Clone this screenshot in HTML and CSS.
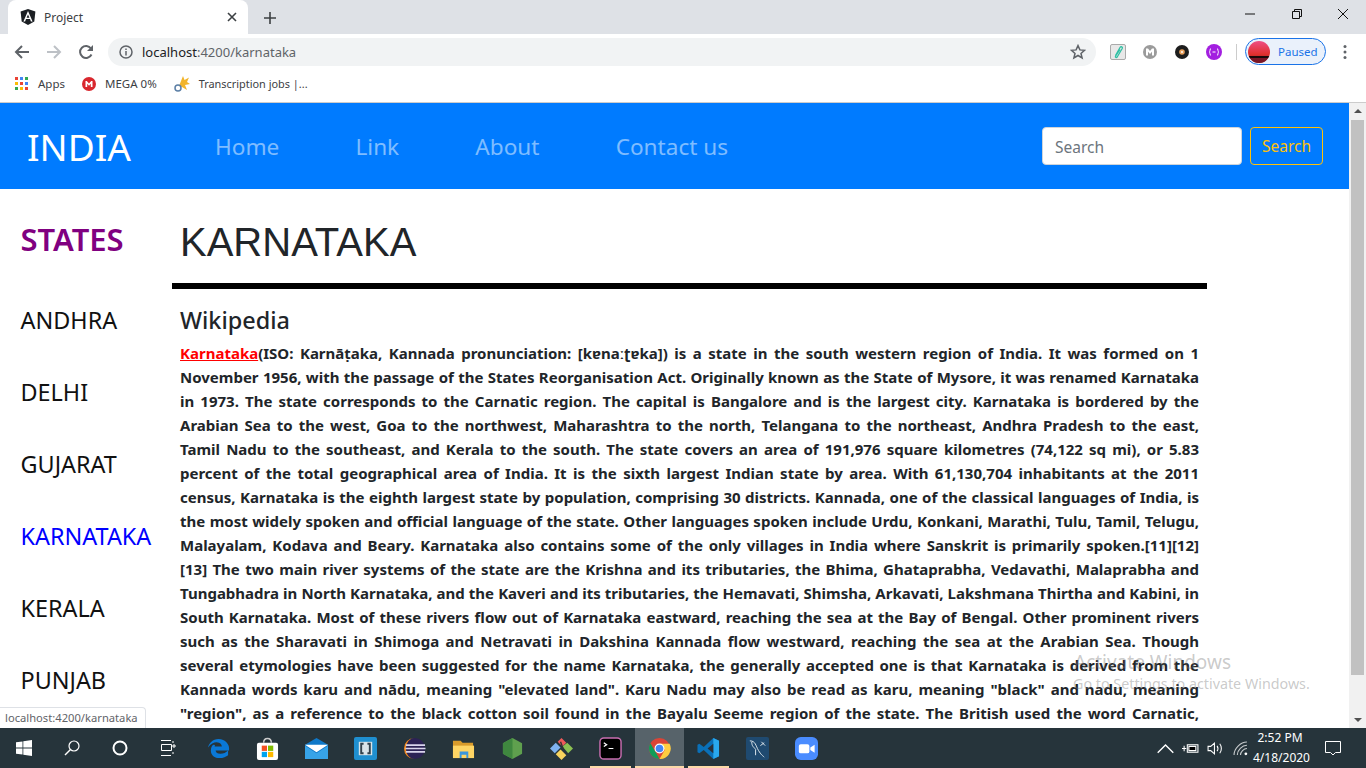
FILE: index.html
```html
<!DOCTYPE html>
<html lang="en">
<head>
<meta charset="utf-8">
<title>Project</title>
<link rel="stylesheet" href="styles.css">
</head>
<body>
<div class="chrome-tabs">
  <div class="tab">
    <svg class="tab-icon" viewBox="0 0 16 16"><path fill="#1b1f23" d="M8 0 .6 2.600l1.100 9.800L8 16l6.300-3.600 1.100-9.800z"/><path fill="#fff" d="M8 2 3.400 12.400h1.700l.9-2.300h4l.9 2.300h1.700zm0 3.500 1.400 3.300H6.600z"/></svg>
    <span class="tab-title">Project</span>
    <svg class="tab-close" viewBox="0 0 10 10"><path d="M1 1l8 8M9 1l-8 8" stroke="#3c4043" stroke-width="1.600" fill="none"/></svg>
  </div>
  <svg class="new-tab" viewBox="0 0 12 12"><path d="M6 0v12M0 6h12" stroke="#3c4043" stroke-width="1.600"/></svg>
  <div class="win-controls">
    <svg viewBox="0 0 12 12"><path d="M1 6h10" stroke="#111" stroke-width="1"/></svg>
    <svg viewBox="0 0 12 12"><path d="M1.500 3.500h7v7h-7zM3.500 3.500v-2h7v7h-2" stroke="#111" fill="none"/></svg>
    <svg viewBox="0 0 12 12"><path d="M1 1l10 10M11 1 1 11" stroke="#111" fill="none"/></svg>
  </div>
</div>
<div class="chrome-toolbar">
  <svg class="nav-btn" viewBox="0 0 16 16"><path d="M15 8H2M8 2 2 8l6 6" stroke="#5f6368" stroke-width="2" fill="none"/></svg>
  <svg class="nav-btn" viewBox="0 0 16 16"><path d="M1 8h13M8 2l6 6-6 6" stroke="#bdc1c6" stroke-width="2" fill="none"/></svg>
  <svg class="nav-btn nav-last" viewBox="0 0 16 16"><path d="M13.500 10.500A6 6 0 1 1 13 4.500" stroke="#5f6368" stroke-width="2" fill="none"/><path d="M15 1v6H9z" fill="#5f6368"/></svg>
  <div class="omnibox">
    <svg class="info-icon" viewBox="0 0 14 14"><circle cx="7" cy="7" r="6" stroke="#5f6368" stroke-width="1.500" fill="none"/><path d="M7 6v4.500M7 3.500v1.500" stroke="#5f6368" stroke-width="1.500"/></svg>
    <span class="url"><span class="url-host">localhost</span>:4200/karnataka</span>
    <svg class="star" viewBox="0 0 16 16"><path d="M8 1.600l1.900 4.300 4.600.4-3.500 3.100 1.100 4.600L8 11.500l-4.100 2.500L5 9.400 1.500 6.300l4.600-.4z" stroke="#5f6368" stroke-width="1.500" fill="none"/></svg>
  </div>
  <div class="extensions">
    <svg class="ext" viewBox="0 0 16 16"><rect x=".5" y=".5" width="15" height="15" rx="1.500" fill="#e8e8e8" stroke="#aaa"/><path d="M5.500 11.500 10 3.500c1-1.500 3-.5 2.200 1l-5 8.500c-.8 1-2.200.3-1.700-.8L10 5.500" stroke="#2fc0a4" stroke-width="1.300" fill="none"/></svg>
    <svg class="ext" viewBox="0 0 16 16"><circle cx="8" cy="8" r="7" fill="#9b9b9b"/><path d="M4 11.500v-7h2L8 7l2-2.500h2v7h-2V7.800L8 10 6 7.800v3.700z" fill="#fff"/></svg>
    <svg class="ext" viewBox="0 0 16 16"><circle cx="8" cy="8" r="7" fill="#1d1d1d"/><circle cx="8" cy="8" r="2.800" fill="#e9a15c"/><circle cx="8" cy="8" r="1" fill="#fff"/></svg>
    <svg class="ext" viewBox="0 0 16 16"><circle cx="8" cy="8" r="8" fill="#a31fe0"/><path d="M5 4.500C3.500 4.500 4.500 8 3.200 8c1.300 0 .3 3.500 1.800 3.500M11 4.500c1.500 0 .5 3.500 1.800 3.500-1.300 0-.3 3.500-1.800 3.500M6.500 8h3" stroke="#fff" fill="none"/></svg>
  </div>
  <div class="toolbar-sep"></div>
  <div class="profile">
    <svg class="avatar" viewBox="0 0 22 22"><defs><clipPath id="av"><circle cx="11" cy="11" r="11"/></clipPath><linearGradient id="sky" x1="0" y1="0" x2="0" y2="1"><stop offset="0" stop-color="#ee4f86"/><stop offset=".6" stop-color="#e0302e"/><stop offset="1" stop-color="#8a1a22"/></linearGradient></defs><g clip-path="url(#av)"><rect width="22" height="22" fill="url(#sky)"/><rect y="15" width="22" height="2" fill="#1a0a0a"/><rect y="17" width="22" height="5" fill="#7a1626"/></g></svg>
    <span>Paused</span>
  </div>
  <svg class="kebab" viewBox="0 0 4 16"><circle cx="2" cy="2.500" r="1.500" fill="#5f6368"/><circle cx="2" cy="8" r="1.500" fill="#5f6368"/><circle cx="2" cy="13.500" r="1.500" fill="#5f6368"/></svg>
</div>
<div class="chrome-bookmarks">
  <div class="bookmark">
    <svg class="bm-icon" viewBox="0 0 14 14"><path fill="#ea4335" d="M0 0h3v3H0z"/><path fill="#4285f4" d="M5 0h3v3H5z"/><path fill="#34a853" d="M10 0h3v3h-3z"/><path fill="#fbbc05" d="M0 5h3v3H0z"/><path fill="#ea4335" d="M5 5h3v3H5z"/><path fill="#4285f4" d="M10 5h3v3h-3z"/><path fill="#34a853" d="M0 10h3v3H0z"/><path fill="#fbbc05" d="M5 10h3v3H5z"/><path fill="#ea4335" d="M10 10h3v3h-3z"/></svg>
    Apps
  </div>
  <div class="bookmark">
    <svg class="bm-icon" viewBox="0 0 14 14"><circle cx="7" cy="7" r="7" fill="#d9272e"/><path d="M3.500 10V4h1.300L7 6.500 9.200 4h1.300v6H8.800V6.800L7 8.800 5.200 6.800V10z" fill="#fff"/></svg>
    MEGA 0%
  </div>
  <div class="bookmark bm-narrow">
    <svg class="bm-icon-wide" viewBox="0 0 16 16"><path d="M9 0l1.500 4L15 1.500 13 6l3 2-5 1 2 5-5-3-3-1 2-5z" fill="#f2b42a"/><circle cx="4" cy="12" r="3" fill="none" stroke="#5b7fa6" stroke-width="1.500"/></svg>
    Transcription jobs |...
  </div>
</div>
<div class="viewport">
  <div class="page">
    <nav class="navbar">
      <a class="brand">INDIA</a>
      <ul class="nav-links">
        <li>Home</li>
        <li>Link</li>
        <li>About</li>
        <li>Contact us</li>
      </ul>
      <form class="search">
        <input class="search-input" placeholder="Search">
        <button class="search-btn" type="button">Search</button>
      </form>
    </nav>
    <div class="content">
      <aside class="sidebar">
        <h2 class="side-title">STATES</h2>
        <ul class="state-list">
          <li>ANDHRA</li>
          <li>DELHI</li>
          <li>GUJARAT</li>
          <li class="active">KARNATAKA</li>
          <li>KERALA</li>
          <li>PUNJAB</li>
        </ul>
      </aside>
      <main class="article">
        <h1 class="article-title">KARNATAKA</h1>
        <hr class="rule">
        <h3 class="source">Wikipedia</h3>
        <div class="body-text">
          <p><a class="wiki-link">Karnataka</a>(ISO: Karnāṭaka, Kannada pronunciation: [kɐnaːʈɐka]) is a state in the south western region of India. It was formed on 1</p>
          <p>November 1956, with the passage of the States Reorganisation Act. Originally known as the State of Mysore, it was renamed Karnataka</p>
          <p>in 1973. The state corresponds to the Carnatic region. The capital is Bangalore and is the largest city. Karnataka is bordered by the</p>
          <p>Arabian Sea to the west, Goa to the northwest, Maharashtra to the north, Telangana to the northeast, Andhra Pradesh to the east,</p>
          <p>Tamil Nadu to the southeast, and Kerala to the south. The state covers an area of 191,976 square kilometres (74,122 sq mi), or 5.83</p>
          <p>percent of the total geographical area of India. It is the sixth largest Indian state by area. With 61,130,704 inhabitants at the 2011</p>
          <p>census, Karnataka is the eighth largest state by population, comprising 30 districts. Kannada, one of the classical languages of India, is</p>
          <p>the most widely spoken and official language of the state. Other languages spoken include Urdu, Konkani, Marathi, Tulu, Tamil, Telugu,</p>
          <p>Malayalam, Kodava and Beary. Karnataka also contains some of the only villages in India where Sanskrit is primarily spoken.[11][12]</p>
          <p>[13] The two main river systems of the state are the Krishna and its tributaries, the Bhima, Ghataprabha, Vedavathi, Malaprabha and</p>
          <p>Tungabhadra in North Karnataka, and the Kaveri and its tributaries, the Hemavati, Shimsha, Arkavati, Lakshmana Thirtha and Kabini, in</p>
          <p>South Karnataka. Most of these rivers flow out of Karnataka eastward, reaching the sea at the Bay of Bengal. Other prominent rivers</p>
          <p>such as the Sharavati in Shimoga and Netravati in Dakshina Kannada flow westward, reaching the sea at the Arabian Sea. Though</p>
          <p>several etymologies have been suggested for the name Karnataka, the generally accepted one is that Karnataka is derived from the</p>
          <p>Kannada words karu and nādu, meaning "elevated land". Karu Nadu may also be read as karu, meaning "black" and nadu, meaning</p>
          <p>"region", as a reference to the black cotton soil found in the Bayalu Seeme region of the state. The British used the word Carnatic,</p>
        </div>
      </main>
    </div>
  </div>
  <div class="scrollbar">
    <svg class="sb-arrow" viewBox="0 0 8 4"><path d="M4 0 8 4H0z" fill="#505050"/></svg>
    <div class="sb-track"><div class="sb-thumb"></div></div>
    <svg class="sb-arrow" viewBox="0 0 8 4"><path d="M0 0h8L4 4z" fill="#505050"/></svg>
  </div>
  <div class="status-bubble">localhost:4200/karnataka</div>
  <div class="activate">
    <div class="activate-big">Activate Windows</div>
    <div class="activate-small">Go to Settings to activate Windows.</div>
  </div>
</div>
<footer class="taskbar">
  <svg class="tb-start" viewBox="0 0 16 16"><path fill="#fff" d="M0 2.300 6.500 1.400v6.200H0zM7.300 1.300 16 0v7.600H7.300zM0 8.400h6.500v6.200L0 13.700zM7.300 8.400H16V16l-8.700-1.300z"/></svg>
  <svg class="tb-sys" viewBox="0 0 16 16"><circle cx="10" cy="6" r="5" stroke="#fff" stroke-width="1.200" fill="none"/><path d="M6.500 9.500 1 15" stroke="#fff" stroke-width="1.400"/></svg>
  <svg class="tb-sys" viewBox="0 0 16 16"><circle cx="8" cy="8" r="6.500" stroke="#fff" stroke-width="2" fill="none"/></svg>
  <svg class="tb-sys" viewBox="0 0 16 16"><path d="M1 .5h10M1 15.500h10M1.500 4.500h10v6h-10z M13 1v2M13 5h2v2h-2zM13 12v2" stroke="#fff" fill="none"/></svg>
  <div class="tb-app tb-first"><svg viewBox="0 0 24 24"><path fill="#0a78d7" d="M12 2C6 2 2 6.500 1 11c3-4 6-5.500 9-5.500 4 0 5.500 3 5.500 4.500H8c0-1 1-2-1-2-1 0-3 2-3 6 0 5 4 8 9 8 4 0 7-1.500 9-3v-5c-2 2-5 3.500-8 3.500-3 0-5-1.500-5-3.500h14C24 7.500 19 2 12 2z"/></svg></div>
  <div class="tb-app"><svg viewBox="0 0 24 24"><rect x="1" y="6" width="22" height="18" rx="2" fill="#fff"/><path d="M8 6c0-6 8-6 8 0" stroke="#ccc" fill="none" stroke-width="1.500"/><path fill="#f25022" d="M6 9h5.500v5.500H6z"/><path fill="#7fba00" d="M12.500 9H18v5.500h-5.500z"/><path fill="#00a4ef" d="M6 15.500h5.500V21H6z"/><path fill="#ffb900" d="M12.500 15.500H18V21h-5.500z"/></svg></div>
  <div class="tb-app"><svg viewBox="0 0 24 24"><path fill="#0f78c8" d="M0 8 12 1l12 7v15H0z"/><path fill="#37a3e8" d="M0 9l12 8 12-8v14H0z"/><path fill="#fff" d="M0 8h24l-12 8z"/></svg></div>
  <div class="tb-app"><svg viewBox="0 0 24 24"><rect width="24" height="24" rx="2" fill="#1f8fd0"/><rect x="5" y="5" width="14" height="14" fill="#d9e4ea"/><path d="M10 7H7.500v10H10M14 7h2.500v10H14" stroke="#31424e" stroke-width="2" fill="none"/></svg></div>
  <div class="tb-app"><svg viewBox="0 0 24 24"><circle cx="12" cy="12" r="11" fill="#2c2255"/><path d="M12 1a11 11 0 0 0 0 22 9 11 0 0 1 0-22z" fill="#f28a18"/><path d="M3 8.500h20M2.500 12h21M3 15.500h20" stroke="#d9d5ec" stroke-width="1.800"/></svg></div>
  <div class="tb-app"><svg viewBox="0 0 24 24"><path fill="#d99b2b" d="M1 4h8l2 2h11v15H1z"/><path fill="#ffd564" d="M1 9h22v13H1z"/><path fill="#3a96dd" d="M8 15h9v7h-2v-3.500h-5V22H8z"/></svg></div>
  <div class="tb-app"><svg viewBox="0 0 24 24"><path fill="#5fa04e" d="M12 1l10 5.500v11L12 23 2 17.500v-11z"/><path fill="#3f873f" d="M12 1v22L2 17.500v-11z"/></svg></div>
  <div class="tb-app"><svg viewBox="0 0 24 24"><path fill="#ef5a5a" d="M8 5l4-4 5 5-4 4z"/><path fill="#7fb2f0" d="M0 12l6-6 5 5-6 6z"/><path fill="#8cc152" d="M13 10l5-4 6 6-5 5z"/><path fill="#f8d35e" d="M6 18l5-5 6 6-5 5z"/><path d="M11 5l3 8" stroke="#333" stroke-width="1.500"/></svg></div>
  <div class="tb-app tb-open"><svg viewBox="0 0 24 24"><rect x="1" y="1" width="22" height="22" rx="4" fill="#000" stroke="#c86eb0" stroke-width="1.500"/><path d="M5 6l3 2-3 2M10 12h5" stroke="#fff" stroke-width="1.300" fill="none"/></svg></div>
  <div class="tb-app tb-open tb-active"><svg viewBox="0 0 24 24"><circle cx="12" cy="12" r="11" fill="#db4437"/><path fill="#0f9d58" d="M12 23A11 11 0 0 1 2.500 6.500L8 16z"/><path fill="#ffcd40" d="M12 23l5.500-9.500L12 7h10.500A11 11 0 0 1 12 23z"/><circle cx="12" cy="12" r="5.200" fill="#fff"/><circle cx="12" cy="12" r="4" fill="#4285f4"/></svg></div>
  <div class="tb-app tb-open"><svg viewBox="0 0 24 24"><path fill="#0a70b8" d="M17 1l6 3v16l-6 3L7 13.500 2.500 17 .5 16v-8l2-1L7 10.500z"/><path fill="#29a8ee" d="M17 1l6 3v16l-6 3z"/><path fill="#29303a" d="M17 7v10l-6-5z"/></svg></div>
  <div class="tb-app"><svg viewBox="0 0 24 24"><rect width="24" height="24" rx="2" fill="#1f4a70"/><path d="M4 4c6 0 6 5 9 10s4 5 6 7M6 5c0 5 2 5 4 8v6M16 5l4 4M15 9l4-3" stroke="#dfe8ee" stroke-width="1" fill="none"/></svg></div>
  <div class="tb-app"><svg viewBox="0 0 24 24"><rect width="24" height="24" rx="6" fill="#4a8cff"/><rect x="4" y="7.500" width="11" height="9.500" rx="2" fill="#fff"/><path d="M16 11l4.500-3v8.500L16 13.500z" fill="#fff"/></svg></div>
  <div class="tray">
    <svg class="tray-icon" viewBox="0 0 12 7"><path d="M.5 6.500 6 1l5.500 5.500" stroke="#fff" fill="none"/></svg>
    <svg class="tray-icon" viewBox="0 0 16 12"><path d="M5 2.500h10v7H5z" stroke="#fff" fill="none"/><path d="M6.500 4H13v4H6.500zM0 6h4M2 3.500v5" stroke="#fff"/></svg>
    <svg class="tray-icon" viewBox="0 0 16 14"><path d="M1 5v4h2.500L7 12V2L3.500 5zM9.500 4.500c1 1.500 1 3.500 0 5M12 2.500c2 2.500 2 6.500 0 9" stroke="#fff" fill="none"/></svg>
    <svg class="tray-icon" viewBox="0 0 14 14"><path d="M1 13C1 7 7 1 13 1M4 13c0-4.500 4.500-9 9-9M7 13c0-3 3-6 6-6" stroke="#c8ccce" fill="none"/><circle cx="12" cy="12" r="1.300" fill="#fff"/></svg>
    <div class="clock"><div>2:52 PM</div><div>4/18/2020</div></div>
    <svg class="notify" viewBox="0 0 16 16"><path d="M.5 1.500h15v11h-5l-2.500 2.500-2.500-2.500h-5z" stroke="#fff" fill="none"/></svg>
  </div>
</footer>
</body>
</html>
```

FILE: styles.css
```css
* { box-sizing: border-box; }
html, body { margin: 0; height: 100%; overflow: hidden; }
body { width: 1366px; height: 768px; display: flex; flex-direction: column; font-family: "Noto Sans", "Open Sans", sans-serif; background: #fff; }

.chrome-tabs { height: 34px; background: #dee1e6; display: flex; align-items: flex-end; flex: none; }
.tab { width: 240px; height: 34px; margin-left: 8px; background: #fff; border-radius: 8px 8px 0 0; display: flex; align-items: center; padding: 0 8px 0 12px; }
.tab-icon { width: 16px; height: 16px; }
.tab-title { margin-left: 8px; font-size: 12px; color: #3c4043; flex: 1; }
.tab-close { width: 10px; height: 10px; margin-right: 3px; }
.new-tab { width: 12px; height: 12px; margin: 0 0 10px 16px; }
.win-controls { margin-left: auto; display: flex; height: 28px; align-self: flex-start; align-items: center; padding-right: 17px; gap: 34.500px; }
.win-controls svg { width: 12px; height: 12px; }

.chrome-toolbar { height: 35px; display: flex; align-items: center; flex: none; padding-left: 14px; background: #fff; }
.nav-btn { width: 16px; height: 16px; margin-right: 16px; }
.nav-last { margin-right: 14px; }
.omnibox { width: 988px; height: 28px; background: #f1f3f4; border-radius: 14px; display: flex; align-items: center; padding: 0 10px 0 11px; }
.info-icon { width: 14px; height: 14px; }
.url { font-size: 13px; color: #5f6368; margin-left: 9px; flex: 1; }
.url-host { color: #202124; }
.star { width: 16px; height: 16px; }
.extensions { display: flex; align-items: center; gap: 16px; margin-left: 14px; }
.ext { width: 16px; height: 16px; }
.toolbar-sep { width: 1px; height: 16px; background: #ccc; margin: 0 8px 0 14px; }
.profile { width: 81px; height: 27px; border: 1px solid #1a73e8; border-radius: 14px; background: #eaf1fb; display: flex; align-items: center; padding-left: 2px; font-size: 11.500px; color: #1a73e8; gap: 8px; }
.avatar { width: 22px; height: 22px; }
.kebab { width: 4px; height: 16px; margin-left: 17px; }

.chrome-bookmarks { height: 34px; display: flex; align-items: center; padding: 0 0 4px 15px; gap: 17px; flex: none; font-size: 11.500px; color: #3c4043; background: #fff; border-bottom: 1px solid #ccc; }
.bookmark { display: flex; align-items: center; gap: 9px; }
.bm-narrow { font-size: 10.900px; }
.bm-icon { width: 14px; height: 14px; }
.bm-icon-wide { width: 16px; height: 16px; }

.viewport { flex: 1; position: relative; display: flex; overflow: hidden; min-height: 0; }
.page { flex: 1; min-width: 0; overflow: hidden; }
.navbar { height: 86px; background: #007bff; display: flex; align-items: center; padding: 0 26px 0 27px; }
.brand { font-size: 37px; color: #fff; width: 188px; }
.nav-links { list-style: none; display: flex; margin: 0; padding: 0; gap: 76.200px; font-size: 22.600px; color: rgba(255,255,255,.5); }
.search { margin-left: auto; display: flex; gap: 8px; }
.search-input { width: 200px; height: 38px; border: 1px solid #ced4da; border-radius: 4px; padding: 2px 12px 0; font: 15.500px "Noto Sans", sans-serif; background: #fff; }
.search-input::placeholder { color: #6c757d; }
.search-btn { width: 73px; height: 38px; border: 1px solid #ffc107; border-radius: 4px; background: transparent; color: #ffc107; font: 15.500px "Noto Sans", sans-serif; padding: 0; }

.content { display: flex; }
.sidebar { width: 172px; flex: none; padding-left: 20.500px; }
.side-title { font-size: 31px; font-weight: 600; color: purple; margin: 28px 0 0; line-height: 44px; }
.state-list { list-style: none; margin: 0; padding: 0; font-size: 23.400px; color: #111; line-height: 36px; }
.state-list li { margin-top: 36px; }
.state-list li:first-child { margin-top: 41px; }
.state-list .active { color: blue; }

.article { width: 1035px; flex: none; }
.article-title { font: 400 40px/48px "Liberation Sans", Arial, sans-serif; color: #212529; margin: 29px 0 0 8px; }
.rule { height: 6px; background: #000; border: 0; margin: 17px 0 0; }
.source { font-size: 23.400px; font-weight: 500; color: #212529; margin: 15px 0 0 8px; line-height: 32px; }
.body-text { margin: 5px 8px 0 8px; font-weight: 700; font-size: 15px; line-height: 24px; color: #212529; }
.body-text p { margin: 0; text-align: justify; text-align-last: justify; white-space: nowrap; }
.wiki-link { color: red; text-decoration: underline; }

.scrollbar { width: 17px; flex: none; background: #f1f1f1; display: flex; flex-direction: column; align-items: center; justify-content: space-between; padding: 6px 0; }
.sb-arrow { width: 8px; height: 4px; flex: none; }
.sb-track { flex: 1; width: 100%; padding: 7px 2px 0; }
.sb-thumb { width: 100%; height: 555px; background: #c1c1c1; }

.status-bubble { position: absolute; left: 0; bottom: 0; height: 21px; padding: 2px 7px 0 5px; font-size: 11.200px; color: #5f6368; background: #fff; border: 1px solid #dee1e6; border-left: 0; border-bottom: 0; border-radius: 0 4px 0 0; }
.activate { position: absolute; left: 1074px; top: 546px; color: rgba(120,120,120,.4); pointer-events: none; }
.activate-big { font-size: 19px; line-height: 26px; }
.activate-small { font-size: 14.300px; line-height: 20px; margin: -1px 0 0 -1px; }

.taskbar { height: 40px; flex: none; background: #26343b; display: flex; align-items: center; padding-left: 16px; }
.tb-start { width: 16px; height: 16px; margin-right: 32px; }
.tb-sys { width: 16px; height: 16px; margin-right: 32px; }
.tb-app { width: 49px; height: 40px; display: flex; align-items: center; justify-content: center; position: relative; }
.tb-app svg { width: 23px; height: 23px; }
.tb-first { margin-left: -14.500px; }
.tb-open::after { content: ""; position: absolute; left: 4px; right: 4px; bottom: 0; height: 2px; background: #fcd9a8; }
.tb-active { background: #57636a; }
.tb-active::after { left: 0; right: 0; }
.tray { margin-left: auto; display: flex; align-items: center; color: #fff; }
.tray-icon { width: 17px; height: 15px; margin-right: 8px; }
.clock { font-size: 12px; line-height: 20px; text-align: center; width: 54px; margin: 0 18px 0 -4px; }
.notify { width: 16px; height: 16px; margin-right: 25px; }
```
